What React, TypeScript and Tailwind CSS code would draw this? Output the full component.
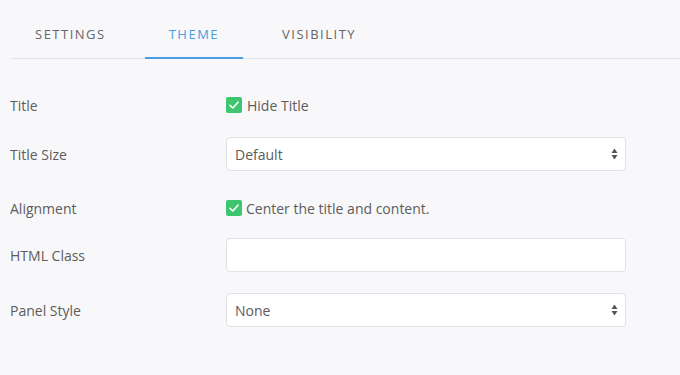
import React from 'react';

const tabs = ['Settings', 'Theme', 'Visibility'];

function Check() {
  return (
    <span className="w-[16px] h-[16px] rounded-[2px] bg-[#3ec56f] flex items-center justify-center">
      <svg width="12" height="12" viewBox="0 0 12 12" fill="none">
        <path d="M2 6.3 L4.8 9 L10 3.2" stroke="white" strokeWidth="1.6" strokeLinecap="round" strokeLinejoin="round" />
      </svg>
    </span>
  );
}

function Arrows() {
  return (
    <svg width="7" height="12" viewBox="0 0 7 12" className="absolute right-[7px] top-1/2 -translate-y-1/2">
      <path d="M3.5 0.5 L6.5 5 L0.5 5 Z" fill="#555" />
      <path d="M3.5 11.5 L6.5 7 L0.5 7 Z" fill="#555" />
    </svg>
  );
}

function Label({ children }: { children: React.ReactNode }) {
  return <div className="w-[216px] shrink-0 text-[14px] text-[#5c5c5c]">{children}</div>;
}

export default function App() {
  return (
    <div className="w-[680px] h-[375px] bg-[#f8f8fa] overflow-hidden" style={{ fontFamily: '"Open Sans", sans-serif' }}>
      {/* Tabs */}
      <div className="ml-[11px] flex gap-[15px] border-b border-[#e3e3e8] h-[59px]">
        {tabs.map(t => {
          const active = t === 'Theme';
          return (
            <div
              key={t}
              className={`h-[59px] -mb-px px-6 pt-[25px] text-[13px] leading-[18px] uppercase tracking-[1.5px] ${
                active ? 'border-b-2 border-[#4a9de0] text-[#4a9de0]' : 'text-[#666]'
              }`}
            >
              {t}
            </div>
          );
        })}
      </div>

      {/* Form */}
      <div className="pl-[10px] w-[626px]">
        <div className="mt-[36px] h-[20px] flex items-center">
          <Label>Title</Label>
          <div className="flex items-center gap-[5px] text-[14px] text-[#5c5c5c]">
            <Check />
            <span>Hide Title</span>
          </div>
        </div>

        <div className="mt-[22px] flex items-center">
          <Label>Title Size</Label>
          <div className="relative flex-1 h-[34px] bg-white border border-[#e1e1e6] rounded-[4px] flex items-center px-[8px] text-[14px] text-[#5c5c5c]">
            Default
            <Arrows />
          </div>
        </div>

        <div className="mt-[27px] h-[20px] flex items-center">
          <Label>Alignment</Label>
          <div className="flex items-center gap-[4px] text-[14px] text-[#5c5c5c]">
            <Check />
            <span>Center the title and content.</span>
          </div>
        </div>

        <div className="mt-[20px] flex items-center">
          <Label>HTML Class</Label>
          <div className="flex-1 h-[34px] bg-white border border-[#e1e1e6] rounded-[4px]" />
        </div>

        <div className="mt-[21px] flex items-center">
          <Label>Panel Style</Label>
          <div className="relative flex-1 h-[34px] bg-white border border-[#e1e1e6] rounded-[4px] flex items-center px-[8px] text-[14px] text-[#5c5c5c]">
            None
            <Arrows />
          </div>
        </div>
      </div>
    </div>
  );
}
